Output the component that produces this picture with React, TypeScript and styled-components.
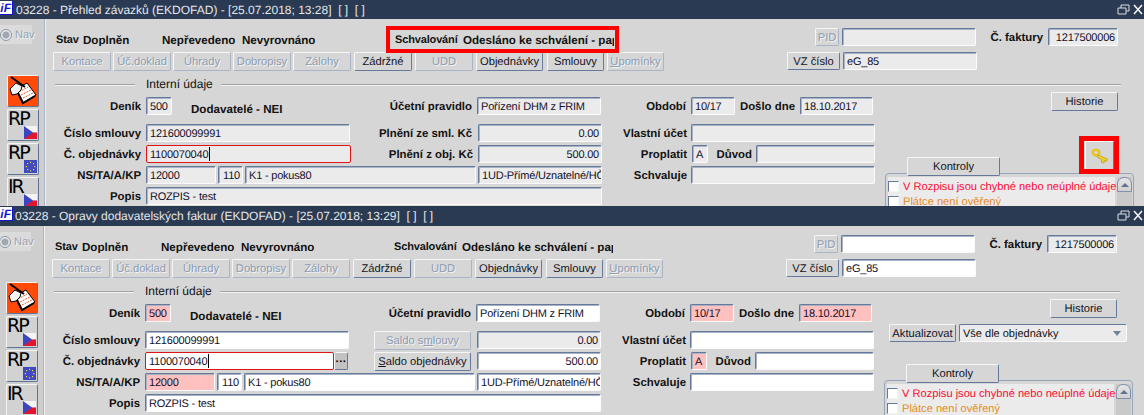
import React from "react"
import styled, { createGlobalStyle } from "styled-components"

const GlobalStyle = createGlobalStyle`
  html, body { margin: 0; padding: 0; background: #d6d6d6; }
  body {
    width: 1144px;
    height: 415px;
    overflow: hidden;
    font: 12px "Liberation Sans", Arial, sans-serif;
    color: #111;
    text-rendering: geometricPrecision;
  }
`

const COLOR = {
  TITLE: "#2a3a52",
  BG: "#d6d6d6",
  RAIL: "#cecece",
  FIELD: "#ebebeb",
  EDGE: "#66799a",
  PINK: "#ffc0c0",
  DISABLED: "#8c9cb2",
  MARK: "#fe0000",
}

const Win = styled.section<{ $height: number }>`
  height: ${(p) => p.$height}px;
  overflow: hidden;
  background: ${COLOR.BG};
`

const TitleBar = styled.header<{ $height: number; $shift: number }>`
  display: flex;
  align-items: center;
  height: ${(p) => p.$height}px;
  background: ${COLOR.TITLE};
  color: #e4e7ec;
  font-size: 12px;
  padding-right: 1px;
  & > span { margin-left: ${(p) => 3 - p.$shift}px; white-space: pre; }
`

const Logo = styled.div`
  flex: none;
  width: 13px;
  height: 14px;
  margin-top: -4px;
  background: #fff;
  border-right: 1px solid #1414d0;
  border-bottom: 1px solid #1414d0;
  color: #1414d0;
  font: italic 700 12px/14px "Liberation Sans", sans-serif;
  text-align: right;
  padding-right: 1px;
  box-sizing: border-box;
  overflow: hidden;
`

const WinIcons = styled.svg`
  flex: none;
  margin-left: auto;
  width: 26px;
  height: 14px;
`

const Body = styled.div<{ $shift: number }>`
  display: flex;
  margin-left: -${(p) => p.$shift}px;
  height: 190px;
`

const Rail = styled.aside`
  flex: none;
  width: 45px;
  box-sizing: border-box;
  padding-top: 6px;
  background: ${COLOR.RAIL};
  border-right: 1px solid #a9b4c4;
  box-shadow: 1px 0 0 #f0f0f0;
`

const NavItem = styled.div`
  display: flex;
  align-items: center;
  height: 19px;
  width: 32px;
  background: #dbdbdb;
  color: #98a3b3;
  font-size: 11px;
  margin-bottom: 31px;
  text-shadow: 1px 1px 0 #f4f4f4;
`

const Radio = styled.i`
  flex: none;
  width: 10px;
  height: 10px;
  margin: 0 3px 0 0;
  border: 1px solid #8d99aa;
  border-radius: 50%;
  background: radial-gradient(circle, #a2a8b0 0 3px, #e8e8e8 4px);
`

const Tile = styled.div<{ $active?: boolean }>`
  position: relative;
  width: 32px;
  height: 32px;
  margin: 0 0 2px 7px;
  box-sizing: border-box;
  background: ${(p) => (p.$active ? "#ff4a08" : "#d2d2d2")};
  border: 1px solid;
  border-color: #f4f4f4 #5f7394 #5f7394 #f4f4f4;
  border-radius: 2px;
  overflow: hidden;
`

const TileCode = styled.span`
  display: block;
  font: 19px/19px "DejaVu Sans", sans-serif;
  color: #000;
  letter-spacing: -2px;
`

const Flag = styled.svg`
  position: absolute;
  right: 1px;
  bottom: 1px;
  width: 13px;
  height: 13px;
`

const Main = styled.main`
  flex: none;
  width: 1091px;
  margin-left: 2px;
  padding: 9px 0 0 6px;
`

const Row = styled.div<{ $mt?: number }>`
  display: flex;
  height: 18px;
  margin-top: ${(p) => p.$mt ?? 0}px;
`

const Status = styled.div<{ $w: number; $ml?: number; $up?: boolean }>`
  flex: none;
  width: ${(p) => p.$w}px;
  margin-left: ${(p) => p.$ml ?? 0}px;
  font-weight: 700;
  font-size: ${(p) => (p.$up ? 11 : 11.6)}px;
  letter-spacing: ${(p) => (p.$up ? -0.15 : 0)}px;
  line-height: 16px;
  padding-top: ${(p) => (p.$up ? 4 : 5)}px;
  white-space: nowrap;
  overflow: hidden;
`

const Approval = styled.div<{ $marked: boolean }>`
  position: relative;
  flex: none;
  display: flex;
  width: 233px;
  margin-left: 70px;
  padding-left: 9px;
  box-sizing: border-box;
  ${(p) =>
    p.$marked &&
    `&::after {
      content: "";
      position: absolute;
      inset: -2px 0 -7px 0;
      border: 4px solid ${COLOR.MARK};
    }`}
`

const Button = styled.button<{ $w: number; $ml?: number; $h?: number; $off?: boolean }>`
  flex: none;
  width: ${(p) => p.$w}px;
  height: ${(p) => p.$h ?? 19}px;
  margin-left: ${(p) => p.$ml ?? 0}px;
  padding: 1px 0 0;
  box-sizing: border-box;
  font: 11.2px "Liberation Sans", sans-serif;
  text-rendering: geometricPrecision;
  background: ${COLOR.BG};
  border: 1px solid;
  border-radius: 2px;
  white-space: nowrap;
  color: ${(p) => (p.$off ? COLOR.DISABLED : "#14141e")};
  border-color: #f6f6f6 ${(p) => (p.$off ? "#a9b5c6" : COLOR.EDGE)} ${(p) => (p.$off ? "#a9b5c6" : COLOR.EDGE)} #f6f6f6;
  text-shadow: ${(p) => (p.$off ? "1px 1px 0 #f4f4f4" : "none")};
`

const MoreButton = styled(Button)`
  background: #c2c2c2;
  font-weight: 700;
  line-height: 10px;
  color: #000;
`

const Field = styled.div<{ $w: number; $ml?: number; $tone?: "plain" | "white" | "pink"; $error?: boolean; $right?: boolean }>`
  flex: none;
  width: ${(p) => p.$w}px;
  height: 18px;
  margin-left: ${(p) => p.$ml ?? 0}px;
  box-sizing: border-box;
  padding: 0 ${(p) => (p.$right ? 2 : 1)}px 0 3px;
  font-size: 11px;
  letter-spacing: -0.2px;
  line-height: 18px;
  text-align: ${(p) => (p.$right ? "right" : "left")};
  white-space: nowrap;
  overflow: hidden;
  color: #14102a;
  background: ${(p) => (p.$tone === "white" ? "#fff" : p.$tone === "pink" ? COLOR.PINK : COLOR.FIELD)};
  border: 1px solid;
  border-color: ${(p) => (p.$error ? "#e01414" : `${COLOR.EDGE} #fbfbfb #fbfbfb ${COLOR.EDGE}`)};
  border-radius: 2px;
  box-shadow: ${(p) => (p.$error ? "none" : "inset 1px 1px 0 #a8b4c6")};
`

const Caret = styled.i`
  display: inline-block;
  width: 1px;
  height: 14px;
  margin-left: 1px;
  vertical-align: -3px;
  background: #000;
`

const Label = styled.div<{ $w: number; $ml?: number; $gap?: number }>`
  flex: none;
  width: ${(p) => p.$w}px;
  margin-left: ${(p) => p.$ml ?? 0}px;
  margin-right: ${(p) => p.$gap ?? 5}px;
  padding-top: 2px;
  box-sizing: border-box;
  display: flex;
  justify-content: flex-end;
  align-items: center;
  font-weight: 700;
  font-size: 11.4px;
  white-space: nowrap;
`

const GroupTitle = styled.div`
  display: flex;
  align-items: center;
  height: 14px;
  margin: 7px 0 1px 2px;
  width: 1066px;
  &::before {
    content: "";
    width: 80px;
    height: 1px;
    background: #a2a2a2;
    box-shadow: 0 1px 0 #f2f2f2;
  }
  &::after {
    content: "";
    flex: 1;
    height: 1px;
    background: #a2a2a2;
    box-shadow: 0 1px 0 #f2f2f2;
  }
  & > span { margin: 0 8px 0 11px; }
`

const Lower = styled.div`
  display: flex;
`

const FormCol = styled.div`
  flex: none;
  width: 822px;
  padding-top: 5px;
`

const SideCol = styled.div`
  flex: none;
  width: 260px;
`

const Mid = styled.div`
  display: flex;
  height: 23px;
  padding-top: 6px;
  margin-left: 15px;
`

const Select = styled.div`
  position: relative;
  flex: none;
  width: 168px;
  height: 18px;
  margin-left: 3px;
  box-sizing: border-box;
  padding-left: 3px;
  font-size: 11px;
  line-height: 18px;
  background: ${COLOR.FIELD};
  border: 1px solid;
  border-color: ${COLOR.EDGE} #fbfbfb #fbfbfb ${COLOR.EDGE};
  border-radius: 2px;
  &::after {
    content: "";
    position: absolute;
    right: 5px;
    top: 6px;
    border: 4px solid transparent;
    border-top: 5px solid #71829c;
  }
`

const PanelHead = styled.div`
  position: relative;
  z-index: 1;
  display: flex;
  align-items: flex-end;
  height: 36px;
`

const KeyWrap = styled.div`
  position: relative;
  align-self: flex-start;
  width: 29px;
  height: 29px;
  margin: 1px 0 0 85px;
  &::after {
    content: "";
    position: absolute;
    inset: -5px -5px -4px -6px;
    border: 5px solid ${COLOR.MARK};
  }
`

const KeyButton = styled.div`
  display: flex;
  align-items: center;
  justify-content: center;
  height: 100%;
  box-sizing: border-box;
  background: ${COLOR.BG};
  border: 1px solid;
  border-color: #f6f6f6 ${COLOR.EDGE} ${COLOR.EDGE} #f6f6f6;
`

const Panel = styled.div`
  display: flex;
  width: 249px;
  height: 60px;
  margin: -3px 0 0 10px;
  box-sizing: border-box;
  padding: 3px 2px 0 2px;
  border: 1px solid #96a5ba;
  border-radius: 4px;
`

const List = styled.div`
  flex: none;
  width: 227px;
  padding-top: 2px;
  background: ${COLOR.FIELD};
`

const Check = styled.div<{ $tone: "red" | "orange" }>`
  display: flex;
  align-items: center;
  height: 15px;
  font-size: 11.1px;
  color: ${(p) => (p.$tone === "red" ? "#fa0a32" : "#e48c1c")};
  white-space: nowrap;
  &::before {
    content: "";
    flex: none;
    width: 11px;
    height: 11px;
    margin-right: 4px;
    box-sizing: border-box;
    background: #fff;
    border: 1px solid;
    border-color: ${COLOR.EDGE} #f4f4f4 #f4f4f4 ${COLOR.EDGE};
  }
`

const Scrollbar = styled.div`
  flex: none;
  width: 15px;
  margin-left: 2px;
  background: #c9c9c9;
`

const ScrollUp = styled.div`
  display: flex;
  align-items: center;
  justify-content: center;
  height: 15px;
  box-sizing: border-box;
  border: 1px solid #7e90aa;
  border-radius: 7px 7px 0 0;
  background: linear-gradient(#e6e6e6, #d0d0d0);
  &::before {
    content: "";
    border: 4px solid transparent;
    border-top: 0;
    border-bottom: 4px solid #5f7394;
  }
`

const CzechFlag = () => (
  <Flag viewBox="0 0 13 13">
    <rect width="13" height="6.5" fill="#f4f4f4" />
    <rect y="6.5" width="13" height="6.5" fill="#e2152e" />
    <path d="M0 0 L9 6.5 L0 13 Z" fill="#3a45c4" />
  </Flag>
)

const EuFlag = () => (
  <Flag viewBox="0 0 13 13">
    <rect width="13" height="13" fill="#3f49c0" />
    {[0, 1, 2, 3, 4, 5, 6, 7].map((i) => (
      <rect
        key={i}
        x={6 + 4.2 * Math.cos((i * Math.PI) / 4)}
        y={6 + 4.2 * Math.sin((i * Math.PI) / 4)}
        width="1.2"
        height="1.2"
        fill="#f4d82a"
      />
    ))}
  </Flag>
)

const NotepadIcon = () => (
  <svg width="30" height="30" viewBox="0 0 30 30">
    <path d="M8 13 L19 7 L28 19 L15 27 Z" fill="#fff" stroke="#000" />
    <path d="M11 16 L20 11 M13 19 L23 14 M15 22 L25 17" stroke="#e8602c" strokeDasharray="2 1" />
    <path d="M9 15 L15 27 L27 20" fill="none" stroke="#000" strokeWidth="2" />
    <path d="M2 13 L8 7 L14 10 L13 14 L9 18 L4 19 Z" fill="#f4f4f4" stroke="#000" />
    <path d="M3 1 L17 11" stroke="#000" strokeWidth="2" />
  </svg>
)

const KeyIcon = () => (
  <svg width="18" height="16" viewBox="0 0 18 16">
    <ellipse cx="5" cy="4.5" rx="3.3" ry="2.8" fill={COLOR.BG} stroke="#e8c41c" strokeWidth="2.4" />
    <path d="M7 7 L16.5 11 L15.5 13.5 L13.5 12.5 L13 15 L10.5 14.5 L10.5 11.5 L6 9 Z" fill="#efcf25" stroke="#b8920f" strokeWidth="0.6" />
  </svg>
)

const STATUS_BUTTONS = [
  { text: "Kontace", w: 58, ml: 0, off: true },
  { text: "Úč.doklad", w: 58, ml: 2, off: true },
  { text: "Úhrady", w: 58, ml: 2, off: true },
  { text: "Dobropisy", w: 58, ml: 2, off: true },
  { text: "Zálohy", w: 58, ml: 2, off: true },
  { text: "Zádržné", w: 58, ml: 3 },
  { text: "UDD", w: 58, ml: 3, off: true },
  { text: "Objednávky", w: 67, ml: 3 },
  { text: "Smlouvy", w: 57, ml: 4 },
]

type Props = {
  title: string
  edit?: boolean
  height: number
  barHeight: number
  shift: number
}

const InvoiceWindow = ({ title, edit = false, height, barHeight, shift }: Props) => {
  const tone = edit ? "white" : "plain"
  const pink = edit ? "pink" : "plain"
  return (
    <Win $height={height}>
      <TitleBar $height={barHeight} $shift={shift}>
        <Logo>iF</Logo>
        <span>{title}</span>
        <WinIcons viewBox="0 0 26 14">
          <path d="M4 5 V2 H12 V8 H9 M1 5 H9 V11 H1 Z" fill="none" stroke="#d9dde3" />
          <path d="M17 2 L25 11 M25 2 L17 11" stroke="#f2f2f2" strokeWidth="1.6" />
        </WinIcons>
      </TitleBar>
      <Body $shift={shift}>
        <Rail>
          <NavItem>
            <Radio />
            Nav
          </NavItem>
          <Tile $active>
            <NotepadIcon />
          </Tile>
          <Tile>
            <TileCode>RP</TileCode>
            <CzechFlag />
          </Tile>
          <Tile>
            <TileCode>RP</TileCode>
            <EuFlag />
          </Tile>
          <Tile>
            <TileCode>IR</TileCode>
            <CzechFlag />
          </Tile>
        </Rail>
        <Main>
          <Row>
            <Status $w={27} $ml={3} $up>Stav</Status>
            <Status $w={79}>Doplněn</Status>
            <Status $w={80}>Nepřevedeno</Status>
            <Status $w={74}>Nevyrovnáno</Status>
            <Approval $marked={!edit}>
              <Status $w={68} $up>Schvalování</Status>
              <Status $w={151}>Odesláno ke schválení - papírově</Status>
            </Approval>
            <Button $w={24} $ml={196} $h={18} $off>PID</Button>
            <Field $w={134} $ml={3} $tone={tone} />
            <Label $w={53} $ml={14}>Č. faktury</Label>
            <Field $w={70} $right>1217500006</Field>
          </Row>
          <Row $mt={6}>
            {STATUS_BUTTONS.map((b) => (
              <Button key={b.text} $w={b.w} $ml={b.ml} $off={b.off}>{b.text}</Button>
            ))}
            <Button $w={57} $ml={3} $off><u>U</u>pomínky</Button>
            <Button $w={53} $ml={123} $h={18}>VZ číslo</Button>
            <Field $w={134} $ml={3} $tone={tone}>eG_85</Field>
          </Row>
          <GroupTitle><span>Interní údaje</span></GroupTitle>
          <Lower>
            <FormCol>
              <Row>
                <Label $w={88}>Deník</Label>
                <Field $w={26} $tone={pink}>500</Field>
                <Status $w={95} $ml={19}>Dodavatelé - NEI</Status>
                <Label $w={186}>Účetní pravidlo</Label>
                <Field $w={124} $tone={tone}>Pořízení DHM z FRIM</Field>
                <Label $w={85}>Období</Label>
                <Field $w={44} $tone={pink}>10/17</Field>
                <Label $w={60}>Došlo dne</Label>
                <Field $w={73} $tone={pink}>18.10.2017</Field>
              </Row>
              <Row $mt={9}>
                <Label $w={88}>Číslo smlouvy</Label>
                <Field $w={204} $tone={tone}>121600099991</Field>
                {edit ? (
                  <Button $w={97} $ml={25} $off>Saldo s<u>m</u>louvy</Button>
                ) : (
                  <Label $w={122} $gap={0}>Plnění ze sml. Kč</Label>
                )}
                <Field $w={124} $ml={6} $right>0.00</Field>
                <Label $w={85} $gap={4}>Vlastní účet</Label>
                <Field $w={184} $tone={tone} />
              </Row>
              <Row $mt={3}>
                <Label $w={88}>Č. objednávky</Label>
                {edit ? (
                  <>
                    <Field $w={189} $tone="white" $error>1100070040<Caret /></Field>
                    <MoreButton $w={14} $h={18}>···</MoreButton>
                    <Button $w={97} $ml={26}><u>S</u>aldo objednávky</Button>
                  </>
                ) : (
                  <>
                    <Field $w={205} $error>1100070040<Caret /></Field>
                    <Label $w={122} $gap={0}>Plnění z obj. Kč</Label>
                  </>
                )}
                <Field $w={124} $ml={edit ? 6 : 5} $tone={tone} $right>500.00</Field>
                <Label $w={85}>Proplatit</Label>
                <Field $w={16} $tone={pink}>A</Field>
                <Label $w={44} $gap={4}>Důvod</Label>
                <Field $w={119} $tone={tone} />
              </Row>
              <Row $mt={3}>
                <Label $w={88}>NS/TA/A/KP</Label>
                <Field $w={70} $tone={pink}>12000</Field>
                <Field $w={25} $ml={2} $tone={tone} $right>110</Field>
                <Field $w={231} $ml={2} $tone={tone}>K1 - pokus80</Field>
                <Field $w={124} $ml={2} $tone={tone}>1UD-Přímé/Uznatelné/HČ-</Field>
                <Label $w={85} $gap={4}>Schvaluje</Label>
                <Field $w={184} $tone={tone} />
              </Row>
              <Row $mt={3}>
                <Label $w={88}>Popis</Label>
                <Field $w={456} $tone={tone}>ROZPIS - test</Field>
              </Row>
            </FormCol>
            <SideCol>
              <Button $w={67} $ml={176} $h={19}>Historie</Button>
              {edit ? (
                <Mid>
                  <Button $w={67} $h={18}>Aktualizovat</Button>
                  <Select>Vše dle objednávky</Select>
                </Mid>
              ) : (
                <Mid />
              )}
              <PanelHead>
                <Button $w={93} $ml={32}>Kontroly</Button>
                {!edit && (
                  <KeyWrap>
                    <KeyButton>
                      <KeyIcon />
                    </KeyButton>
                  </KeyWrap>
                )}
              </PanelHead>
              <Panel>
                <List>
                  <Check $tone="red">V Rozpisu jsou chybné nebo neúplné údaje</Check>
                  <Check $tone="orange">Plátce není ověřený</Check>
                </List>
                <Scrollbar>
                  <ScrollUp />
                </Scrollbar>
              </Panel>
            </SideCol>
          </Lower>
        </Main>
      </Body>
    </Win>
  )
}

export default function App() {
  return (
    <>
      <GlobalStyle />
      <InvoiceWindow
        title="03228 - Přehled závazků (EKDOFAD) - [25.07.2018; 13:28]  [ ]  [ ]"
        height={206}
        barHeight={19}
        shift={0}
      />
      <InvoiceWindow
        title="03228 - Opravy dodavatelských faktur (EKDOFAD) - [25.07.2018; 13:29]  [ ]  [ ]"
        edit
        height={209}
        barHeight={20}
        shift={1}
      />
    </>
  )
}
